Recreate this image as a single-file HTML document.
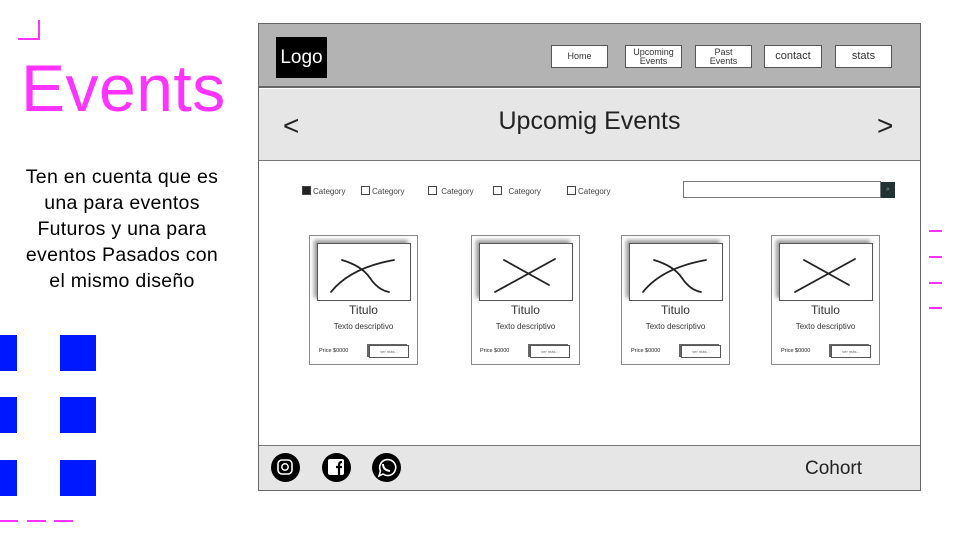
<!DOCTYPE html>
<html><head><meta charset="utf-8"><style>
*{margin:0;padding:0;box-sizing:border-box}
body{width:960px;height:540px;position:relative;background:#fff;font-family:"Liberation Sans",sans-serif;overflow:hidden}
.a{position:absolute}
.btn{position:absolute;top:45px;height:23px;background:#fff;border:1px solid #555;font-size:9px;color:#333;text-align:center;display:flex;align-items:center;justify-content:center;line-height:9px}
.card{position:absolute;top:235px;width:109px;height:130px;border:1px solid #888;background:#fff}
.img{position:absolute;top:243px;width:94px;height:58px;border:1px solid #555;box-shadow:-3px -3px 4px #999}
.cb{position:absolute;top:186px;font-size:8px;color:#444}
.cb i{display:inline-block;width:9px;height:9px;border:1px solid #444;vertical-align:-1px;margin-right:2px}
.ic{position:absolute;top:453px;width:29px;height:29px;border-radius:50%;background:#000}
.dash{position:absolute;height:2px;background:#f3f;}
.sq{position:absolute;background:#0018ff;width:36px;height:36px}
.t{position:absolute;width:109px;text-align:center;color:#333}
.vm{position:absolute;top:345px;width:40px;height:13px;border:1px solid #555;box-shadow:-2px -1px 0 #666;background:#fff;font-size:4px;color:#666;text-align:center;line-height:11px}
</style></head><body>
<div class="a" style="left:38px;top:20px;width:2px;height:20px;background:#f3f"></div>
<div class="a" style="left:18px;top:38px;width:22px;height:2px;background:#f3f"></div>
<div class="a" style="left:21px;top:50px;font-size:66px;color:#ff33ff;line-height:76px;letter-spacing:0.5px">Events</div>
<div class="a" style="left:0;top:164px;width:244px;text-align:center;font-size:19.5px;line-height:26px;color:#000;letter-spacing:0.3px">Ten en cuenta que es<br>una para eventos<br>Futuros y una para<br>eventos Pasados con<br>el mismo diseño</div>
<div class="sq" style="left:0;top:335px;width:17px"></div><div class="sq" style="left:60px;top:335px"></div>
<div class="sq" style="left:0;top:397px;width:17px"></div><div class="sq" style="left:60px;top:397px"></div>
<div class="sq" style="left:0;top:460px;width:17px"></div><div class="sq" style="left:60px;top:460px"></div>
<div class="dash" style="left:0;top:520px;width:18px"></div>
<div class="dash" style="left:27px;top:520px;width:19px"></div>
<div class="dash" style="left:54px;top:520px;width:19px"></div>
<div class="dash" style="left:929px;top:230px;width:13px"></div>
<div class="dash" style="left:929px;top:256px;width:13px"></div>
<div class="dash" style="left:929px;top:282px;width:13px"></div>
<div class="dash" style="left:929px;top:307px;width:13px"></div>

<div class="a" style="left:258px;top:23px;width:663px;height:468px;border:1.5px solid #666;background:#fff"></div>
<div class="a" style="left:259px;top:24px;width:661px;height:64px;background:#b3b3b3;border-bottom:2px solid #666"></div>
<div class="a" style="left:276px;top:37px;width:51px;height:41px;background:#000;color:#fff;font-size:19px;line-height:41px;text-align:center">Logo</div>
<div class="btn" style="left:551px;width:57px">Home</div>
<div class="btn" style="left:625px;width:57px">Upcoming<br>Events</div>
<div class="btn" style="left:695px;width:57px">Past<br>Events</div>
<div class="btn" style="left:764px;width:58px;font-size:11px">contact</div>
<div class="btn" style="left:835px;width:57px;font-size:11px">stats</div>
<div class="a" style="left:259px;top:89px;width:661px;height:72px;background:#e6e6e6;border-bottom:1.5px solid #777"></div>
<div class="a" style="left:259px;top:107px;width:661px;text-align:center;font-size:25px;color:#222">Upcomig Events</div>
<div class="a" style="left:283px;top:110px;font-size:28px;color:#222;line-height:32px">&lt;</div>
<div class="a" style="left:877px;top:110px;font-size:28px;color:#222;line-height:32px">&gt;</div>

<div class="cb" style="left:302px"><i style="background:#222"></i>Category</div>
<div class="cb" style="left:361px"><i></i>Category</div>
<div class="cb" style="left:428px"><i></i> Category</div>
<div class="cb" style="left:493px"><i></i>&nbsp; Category</div>
<div class="cb" style="left:567px"><i></i>Category</div>
<div class="a" style="left:683px;top:181px;width:198px;height:17px;border:1px solid #777;background:#fff"></div>
<div class="a" style="left:881px;top:182px;width:14px;height:16px;background:#233;color:#9aa;font-size:7px;text-align:center;line-height:16px">⌕</div>

<div class="card" style="left:309px"></div>
<div class="card" style="left:471px"></div>
<div class="card" style="left:621px"></div>
<div class="card" style="left:771px"></div>
<div class="img" style="left:317px"></div>
<div class="img" style="left:479px"></div>
<div class="img" style="left:629px"></div>
<div class="img" style="left:779px"></div>
<svg class="a" style="left:0;top:0" width="960" height="540">
<g stroke="#222" stroke-width="1.8" fill="none" stroke-linecap="round">
<g id="x"><path d="M342,260 Q362,266 370,278 Q378,290 389,292"/><path d="M331,292 Q350,268 394,260"/></g>
<g transform="translate(162,0)"><path d="M342,260 L387,285"/><path d="M333,292 L393,259"/></g>
<use href="#x" transform="translate(312,0)"/>
<g transform="translate(462,0)"><path d="M342,260 L387,285"/><path d="M333,292 L393,259"/></g>
</g>
</svg>

<div class="t" style="left:309px;top:303px;font-size:12px">Titulo</div>
<div class="t" style="left:471px;top:303px;font-size:12px">Titulo</div>
<div class="t" style="left:621px;top:303px;font-size:12px">Titulo</div>
<div class="t" style="left:771px;top:303px;font-size:12px">Titulo</div>
<div class="t" style="left:309px;top:322px;font-size:8px">Texto descriptivo</div>
<div class="t" style="left:471px;top:322px;font-size:8px">Texto descriptivo</div>
<div class="t" style="left:621px;top:322px;font-size:8px">Texto descriptivo</div>
<div class="t" style="left:771px;top:322px;font-size:8px">Texto descriptivo</div>
<div class="a" style="left:319px;top:348px;font-size:5.5px;color:#222">Price $0000</div>
<div class="a" style="left:480px;top:348px;font-size:5.5px;color:#222">Price $0000</div>
<div class="a" style="left:631px;top:348px;font-size:5.5px;color:#222">Price $0000</div>
<div class="a" style="left:781px;top:348px;font-size:5.5px;color:#222">Price $0000</div>
<div class="vm" style="left:369px">ver más...</div>
<div class="vm" style="left:530px">ver más...</div>
<div class="vm" style="left:681px">ver más...</div>
<div class="vm" style="left:831px">ver más...</div>

<div class="a" style="left:259px;top:445px;width:661px;height:45px;background:#e6e6e6;border-top:1.5px solid #777"></div>
<div class="ic" style="left:271px"></div>
<div class="ic" style="left:322px"></div>
<div class="ic" style="left:372px"></div>
<svg class="a" style="left:0;top:0" width="960" height="540" fill="none">
<rect x="278" y="460" width="14" height="14" rx="4" stroke="#fff" stroke-width="1.6"/>
<circle cx="285" cy="467" r="3.2" stroke="#fff" stroke-width="1.5"/>
<rect x="328" y="459" width="16" height="16" rx="2" fill="#fff"/>
<path d="M339,475 V465 Q339,462 342,462 M336,467 H342" stroke="#000" stroke-width="2.2"/>
<path d="M379,476 L380.5,471 A8,8 0 1 1 383,474 Z" stroke="#fff" stroke-width="1.6"/>
<path d="M383,464 Q383,470 390,471" stroke="#fff" stroke-width="2"/>
</svg>
<div class="a" style="left:805px;top:458px;font-size:19px;color:#222">Cohort</div>
</body></html>
